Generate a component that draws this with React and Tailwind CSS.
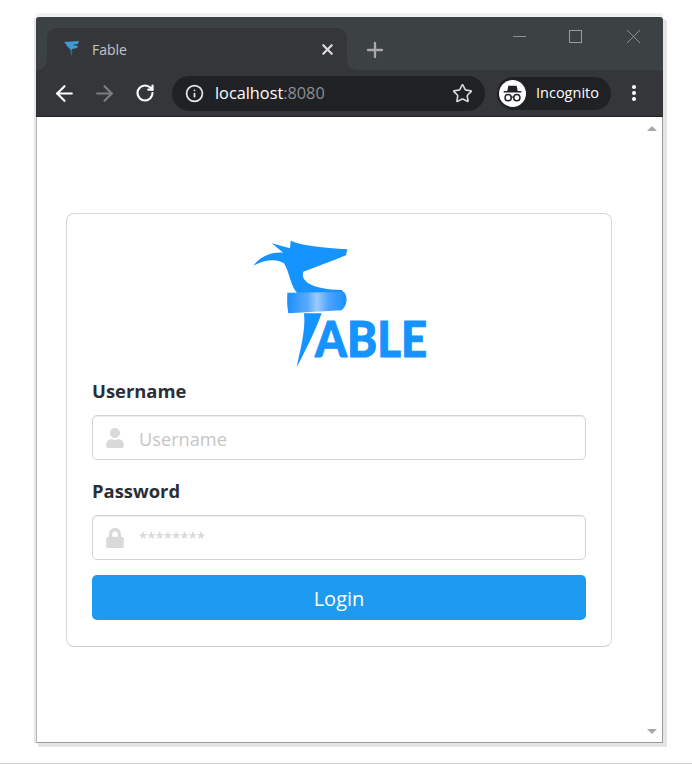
import { ArrowLeft, ArrowRight, RotateCw, Info, Star, X, Plus } from 'lucide-react';
import { FaUser, FaLock } from 'react-icons/fa';

const sans = { fontFamily: '"Open Sans", "Noto Sans", sans-serif' };

const FableLogo = () => (
  <svg width="200" height="145" viewBox="0 0 600 435" className="block">
    <defs>
      <linearGradient id="band" x1="0" x2="1" y1="0" y2="0">
        <stop offset="0" stopColor="#1b8ffb" />
        <stop offset="0.35" stopColor="#5aaafc" />
        <stop offset="0.5" stopColor="#9ccafd" />
        <stop offset="0.7" stopColor="#4ea4fc" />
        <stop offset="1" stopColor="#1890ff" />
      </linearGradient>
    </defs>
    <path
      fill="#1593ff"
      d="M40 107 C62 78 92 66 130 68 L95 40 L150 55 L152 32 C185 48 250 52 322 58 L318 76 C280 92 235 108 190 125 C182 150 205 176 305 180 L312 188 L172 190 C150 165 150 130 132 100 C108 84 72 90 40 107 Z"
    />
    <path
      fill="url(#band)"
      d="M142 188 L312 186 C324 200 322 226 305 241 L145 250 C141 230 141 208 142 188 Z"
    />
    <path fill="#1593ff" d="M192 250 L245 250 C225 305 195 365 170 412 C180 360 198 300 192 250 Z" />
    <text
      x="225"
      y="381"
      fill="#1593ff"
      stroke="#1593ff"
      strokeWidth="3"
      fontSize="150"
      fontWeight="900"
      fontFamily="Lato, sans-serif"
      textLength="336"
      lengthAdjust="spacingAndGlyphs"
    >
      ABLE
    </text>
  </svg>
);

const Favicon = () => (
  <svg width="16" height="18" viewBox="0 0 16 18">
    <path fill="#3f9bd6" d="M0 2 L15 1 L14 4 L8 5 L14 6 L13 8 L8 9 L8 11 L3 6 C2 4 1 3 0 2 Z" />
    <path fill="#1f6f9f" d="M4 7 L8 10 L8.500 12 L7 17 L6.500 11 Z" />
  </svg>
);

const IncognitoIcon = () => (
  <svg width="27" height="27" viewBox="0 0 26 26">
    <circle cx="13" cy="13" r="13" fill="#fff" />
    <path fill="#202124" d="M9 5.500 H17 L18 10.500 H21.500 V12 H4.500 V10.500 H8 Z" />
    <circle cx="8.800" cy="17" r="3" fill="none" stroke="#202124" strokeWidth="1.400" />
    <circle cx="17.200" cy="17" r="3" fill="none" stroke="#202124" strokeWidth="1.400" />
    <path d="M11.500 16.500 H14.500" stroke="#202124" strokeWidth="1.200" />
  </svg>
);

const Field = ({ label, placeholder, icon, small }) => (
  <div>
    <div className="h-[27px] text-[18.4px] leading-[25px] font-bold text-[#2b2e35]" style={sans}>
      {label}
    </div>
    <div className="mt-[10px] flex h-[45px] items-center rounded-[5px] border border-[#d4d4d4] shadow-[inset_0_1px_1px_rgba(0,0,0,0.08)]">
      <div className="flex w-[44px] shrink-0 justify-center text-[#d9d9d9]">{icon}</div>
      <span
        className={
          small
            ? 'ml-[2px] text-[15px] text-[#cfcfcf]'
            : 'ml-[2px] pt-[5px] text-[18.2px] text-[#c6c6c6]'
        }
        style={sans}
      >
        {placeholder}
      </span>
    </div>
  </div>
);

export default function App() {
  return (
    <div className="h-[764px] w-[692px] overflow-hidden border-b border-[#d0d0d0] bg-white pl-[36px] pt-[17px]">
      <div className="flex h-[726px] w-[627px] flex-col rounded-t-[3px] shadow-[0_-4px_0_0_#f0f0f0,-2px_0_0_0_#e6e6e6,3px_3px_0_1px_#e4e4e4]">
        {/* tab strip */}
        <div className="flex h-[53px] shrink-0 items-start rounded-t-[3px] bg-[#3c4144] pl-[11px] pt-[11px]">
          <div className="relative flex h-[42px] w-[300px] shrink-0 items-center rounded-t-[10px] bg-[#35363a] pl-[17px] pr-[11.5px]">
            <div className="absolute bottom-0 left-[-10px] size-[10px] bg-[#35363a]">
              <div className="size-full rounded-br-[10px] bg-[#3c4144]" />
            </div>
            <div className="absolute bottom-0 right-[-10px] size-[10px] bg-[#35363a]">
              <div className="size-full rounded-bl-[10px] bg-[#3c4144]" />
            </div>
            <Favicon />
            <span className="ml-[12px] text-[14px] text-[#c4c6c8]" style={sans}>
              Fable
            </span>
            <X size={17} strokeWidth={3} className="ml-auto text-[#dcdcdc]" />
          </div>
          <Plus size={24} strokeWidth={2.3} className="ml-[16px] mt-[10px] shrink-0 text-[#a8aaac]" />
          {/* window buttons */}
          <svg width="13" height="13" viewBox="0 0 13 13" className="ml-[126px] mt-[2px] shrink-0">
            <path d="M0 6.500 H13" stroke="#8d9092" strokeWidth="1" />
          </svg>
          <svg width="13" height="13" viewBox="0 0 13 13" className="ml-[43px] mt-[2px] shrink-0">
            <rect x="0.500" y="0.500" width="12" height="12" fill="none" stroke="#9a9c9e" strokeWidth="1" />
          </svg>
          <svg width="13" height="13" viewBox="0 0 13 13" className="ml-[45px] mt-[2px] shrink-0">
            <path d="M0 0 L13 13 M13 0 L0 13" stroke="#8d9092" strokeWidth="1" />
          </svg>
        </div>
        {/* toolbar */}
        <div className="flex h-[47px] shrink-0 items-center border-b border-[#202124] bg-[#35363a] pl-[16px]">
          <ArrowLeft size={25} strokeWidth={2.1} className="shrink-0 text-white" />
          <ArrowRight size={25} strokeWidth={2.1} className="ml-[15px] shrink-0 text-[#7c7e80]" />
          <RotateCw size={20} strokeWidth={2.6} className="ml-[18px] shrink-0 text-white" />
          <div className="ml-[17px] flex h-[35px] w-[313px] shrink-0 items-center rounded-full bg-[#202124] px-[12.5px]">
            <Info size={19} strokeWidth={2.2} className="text-[#e8e8e8]" />
            <span className="ml-[11.5px] text-[16.3px] text-white" style={sans}>
              localhost<span className="text-[#8d8f92]">:8080</span>
            </span>
            <Star size={21} strokeWidth={1.8} className="ml-auto text-[#dedede]" />
          </div>
          <div className="ml-[12px] flex h-[33px] w-[114px] shrink-0 items-center rounded-full bg-[#202124] pl-[2px]">
            <IncognitoIcon />
            <span className="ml-[10px] text-[14.5px] text-white" style={sans}>
              Incognito
            </span>
          </div>
          <div className="ml-[21px] flex shrink-0 flex-col gap-[2.5px]">
            <span className="size-[3.500px] rounded-full bg-white" />
            <span className="size-[3.500px] rounded-full bg-white" />
            <span className="size-[3.500px] rounded-full bg-white" />
          </div>
        </div>
        {/* page */}
        <div className="relative min-h-0 flex-1 bg-white pl-[30px] pt-[96px] shadow-[inset_1px_0_0_#b5b5b5,inset_-1px_0_0_#9a9a9a,inset_0_-1px_0_#9a9a9a]">
          <div className="absolute right-[6px] top-[9px] size-0 border-x-[5px] border-b-[5px] border-x-transparent border-b-[#a8a8a8]" />
          <div className="absolute bottom-[9px] right-[6px] size-0 border-x-[5px] border-t-[5px] border-x-transparent border-t-[#a8a8a8]" />
          <div className="h-[434px] w-[546px] rounded-[8px] border border-[#d8d8d8] border-b-[#cfcfcf] px-[25px] pt-[16px]">
            <div className="flex justify-center pl-[1px]">
              <FableLogo />
            </div>
            <div className="mt-[3px] flex flex-col gap-[18px]">
              <Field label="Username" placeholder="Username" icon={<FaUser size={20} />} />
              <Field label="Password" placeholder="********" small icon={<FaLock size={20} />} />
            </div>
            <button className="mt-[15px] h-[45px] w-full rounded-[5px] bg-[#1e9bf0] pt-[2px] text-[20px] text-white" style={sans}>
              Login
            </button>
          </div>
        </div>
      </div>
    </div>
  );
}
